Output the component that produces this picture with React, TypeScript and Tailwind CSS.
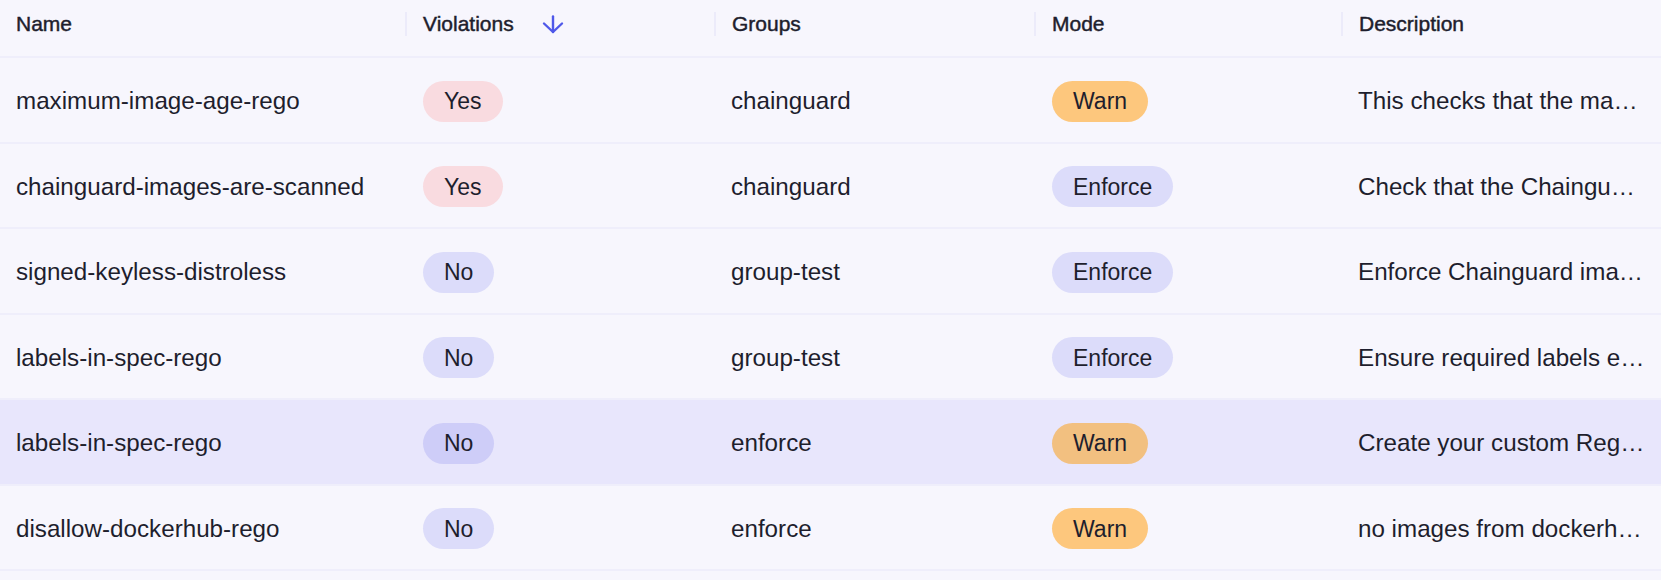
import { ReactNode } from "react";

type Tone = "yes" | "no" | "warn" | "enforce";

// descriptions are shown already shortened, as the list view cuts them
const rows = [
  { name: "maximum-image-age-rego", violations: "Yes", group: "chainguard", mode: "Warn", description: "This checks that the ma…" },
  { name: "chainguard-images-are-scanned", violations: "Yes", group: "chainguard", mode: "Enforce", description: "Check that the Chaingu…" },
  { name: "signed-keyless-distroless", violations: "No", group: "group-test", mode: "Enforce", description: "Enforce Chainguard ima…" },
  { name: "labels-in-spec-rego", violations: "No", group: "group-test", mode: "Enforce", description: "Ensure required labels e…" },
  { name: "labels-in-spec-rego", violations: "No", group: "enforce", mode: "Warn", description: "Create your custom Reg…", active: true },
  { name: "disallow-dockerhub-rego", violations: "No", group: "enforce", mode: "Warn", description: "no images from dockerh…" },
];

const pillColors: Record<Tone, { base: string; active: string }> = {
  yes: { base: "bg-[#F9DBE0]", active: "bg-[#F4D2DA]" },
  no: { base: "bg-[#DCDCFA]", active: "bg-[#CECDF8]" },
  warn: { base: "bg-[#FDC77D]", active: "bg-[#F2C080]" },
  enforce: { base: "bg-[#DCDCFA]", active: "bg-[#CECDF8]" },
};

const Pill = ({ tone, active, children }: { tone: Tone; active?: boolean; children: ReactNode }) => (
  <span
    className={`inline-flex h-[41px] items-center rounded-full px-[21px] text-[23px] text-[#1E1E2D] ${
      active ? pillColors[tone].active : pillColors[tone].base
    }`}
  >
    {children}
  </span>
);

const SortArrow = () => (
  <svg width="22" height="19" viewBox="0 0 22 19" fill="none" stroke="#4F58E9" strokeWidth="2.4" strokeLinecap="round" strokeLinejoin="round">
    <path d="M11 1.5V17" />
    <path d="M2 8.5L11 17L20 8.5" />
  </svg>
);

const HeaderCell = ({ label, first, children }: { label: string; first?: boolean; children?: ReactNode }) => (
  <div className={`flex items-center ${first ? "pl-4" : ""}`}>
    {!first && <div className="mr-4 h-[24px] w-[2px] bg-[#ECEBFA]" />}
    <span className="text-[21px] text-[#1E1E2D] [-webkit-text-stroke:0.45px_#1E1E2D]">{label}</span>
    {children}
  </div>
);

const cols = "grid grid-cols-[405px_309px_320px_307px_320px]";

export default function App() {
  return (
    <div className="flex min-h-[580px] bg-white" style={{ fontFamily: '"Liberation Sans", Arial, sans-serif' }}>
      <div className="h-[580px] w-[1661px] bg-[#F7F6FD]">
        <div className={`${cols} h-[58px] border-b-2 border-[#EFEEFB] pb-[8px]`}>
          <HeaderCell label="Name" first />
          <HeaderCell label="Violations">
            <span className="ml-[28px] flex">
              <SortArrow />
            </span>
          </HeaderCell>
          <HeaderCell label="Groups" />
          <HeaderCell label="Mode" />
          <HeaderCell label="Description" />
        </div>

        {rows.map((r, i) => (
          <div
            key={i}
            className={`${cols} h-[85.5px] border-b-2 border-[#EFEEFB] pt-[3px] text-[24.2px] text-[#1E1E2D] ${
              r.active ? "bg-[#E8E6FC]" : ""
            }`}
          >
            <div className="flex items-center pl-4">{r.name}</div>
            <div className="flex items-center pl-[18px]">
              <Pill tone={r.violations === "Yes" ? "yes" : "no"} active={r.active}>
                {r.violations}
              </Pill>
            </div>
            <div className="flex items-center pl-[17px]">{r.group}</div>
            <div className="flex items-center pl-[18px]">
              <Pill tone={r.mode === "Warn" ? "warn" : "enforce"} active={r.active}>
                {r.mode}
              </Pill>
            </div>
            <div className="flex min-w-0 items-center pl-[17px] pr-1">
              <span className="truncate">{r.description}</span>
            </div>
          </div>
        ))}
      </div>
    </div>
  );
}
